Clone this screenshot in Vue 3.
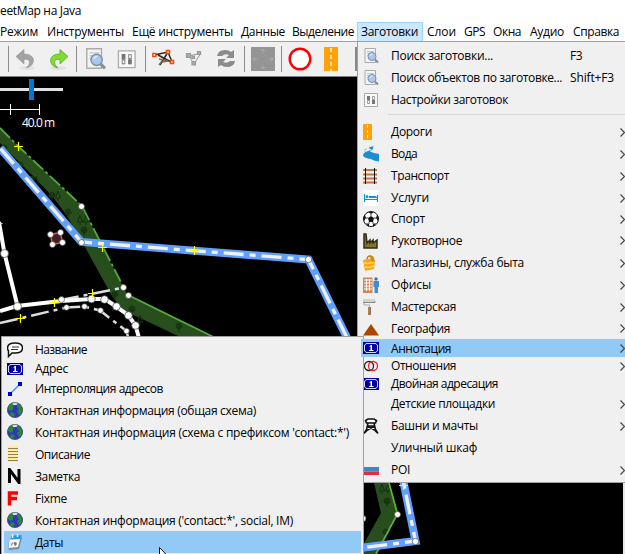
<script setup>
// v-fit spreads a label over the given width in pixels.
const vFit = {
  mounted(el, { value }) {
    if (!value) return
    const natural = el.getBoundingClientRect().width
    el.style.letterSpacing = (value - natural) / el.textContent.length + 'px'
  },
}

const menus = [
  { t: 'Режим', w: 38, g: 0 }, { t: 'Инструменты', w: 77, g: 9 },
  { t: 'Ещё инструменты', w: 101, g: 8 }, { t: 'Данные', w: 44, g: 8 },
  { t: 'Выделение', w: 62, g: 7 }, { t: 'Заготовки', w: 57, g: 3, on: true },
  { t: 'Слои', w: 29, g: 4 }, { t: 'GPS', w: 21, g: 8 }, { t: 'Окна', w: 28, g: 8 },
  { t: 'Аудио', w: 34, g: 9 }, { t: 'Справка', w: 46, g: 9 },
]

const searchIcon = '<path d="M2 .5h10.500v14H2z" fill="#f4f4f0" stroke="#aaa"/><path d="M4 3.500h7M4 5.500h3M4 7.500h2" stroke="#c4c4c4"/><circle cx="9" cy="8.500" r="4" fill="#a9c8ec" stroke="#7790ad"/><path d="M7 8q.5-2 2.500-2" stroke="#e4f0ff" fill="none"/><path d="M12 11.500l3 3" stroke="#8b8e96" stroke-width="2.200"/>'
const prefsIcon = '<path d="M1.500 1.500h13v13h-13z" fill="#f8f8f8" stroke="#aaa"/><path d="M5.500 4v8M10.500 4v8" stroke="#777"/><path d="M4 4h3v4H4zM9 8h3v4H9z" fill="#777"/><path d="M4.500 8.500h2v3h-2zM9.500 4.500h2v3h-2z" fill="#fff" stroke="#888" stroke-width=".8"/>'
const signIcon = '<path d="M0 2h16v12H0z" fill="#0000a0"/><path d="M3 3.500h10q0 1.500 1.500 1.500v6q-1.500 0-1.500 1.500H3q0-1.500-1.500-1.500V5Q3 5 3 3.500z" fill="none" stroke="#d5d5f5"/><path d="M6 6.500l2-1.500h1v5h1.500v1H6v-1h1.500V6.500z" fill="#fff"/>'
const globeIcon = '<circle cx="8" cy="8" r="7.800" fill="#3236bd"/><path d="M2 3q2-2.500 5-2.700l1 3-2 1v3L4 9 1 7q-.5-2 1-4zM10 2l3 .5 2.500 4v3L13 13l-2-1-1-3 2-2-2-2zM4 10l3 1 1 2-2 2-3-2z" fill="#27873e"/><path d="M5 1q3-1.500 6 0L9.500 3h-3z" fill="#dfe9ee"/><circle cx="8" cy="8" r="7.500" fill="none" stroke="#49535f" stroke-width=".7"/>'

const icons = {
  search: searchIcon,
  prefs: prefsIcon,
  sign: signIcon,
  globe: globeIcon,
  road: '<path d="M0 0h9v16H0z" fill="#ffa20a"/><path d="M4.500 1v15" stroke="#fff" stroke-dasharray="3 2"/>',
  water: '<path d="M6 1.500Q8 0 11 .5 9 1.500 10.500 2.500 9 4 6.500 5 8 6.500 16 8v7.500Q11 15 8 13 1 12 0 9.500 0 7 4 5.500 6 4.500 9 3 6 3 6 1.500z" fill="#1b8fd2"/><path d="M1 4l3-1M1 6l2-1" stroke="#7fc0e6" stroke-width=".8"/>',
  rail: '<path d="M0 2h14M0 6.500h14M0 10.500h14M0 14.500h14" stroke="#c8713b" stroke-width="2"/><path d="M2.500 0v16M11.500 0v16" stroke="#111"/>',
  bed: '<rect width="16" height="16" rx="2" fill="#fff"/><path d="M1.500 4v8M14.500 5v7M2 9.500h12" stroke="#0d92d6" stroke-width="1.200"/><path d="M6 6h6q2 0 2 2H6z" fill="#0d92d6"/><circle cx="4" cy="6.700" r="1.400" fill="#0d92d6"/>',
  ball: '<circle cx="8" cy="8" r="7.500" fill="#fff" stroke="#111"/><path d="M8 5l3 2-1 4H6L5 7zM5 1h6L8 3zM0 7l2-3 1 3-2 3zM16 7l-2-3-1 3 2 3zM3 12l3 1v3zM13 12l-3 1v3z" fill="#111"/><path d="M8 5V3M5 7H3m8 0h2M6 11v2m4-2v2" stroke="#111" stroke-width=".8"/>',
  factory: '<path d="M1 15V1h2l1 9 3-3v3l3-3v3l4-3v8z" fill="#857231" stroke="#322c17" stroke-width="1.500"/>',
  bag: '<path d="M4 5q0-4 3-4t3 4" fill="none" stroke="#b77a18" stroke-width="1.300"/><path d="M0 5l10-2 2 3-1 8-9 2z" fill="#f7a81c"/><path d="M1 8q5 1 10-1M2 12q5 1 9-1" stroke="#ffd448" fill="none" stroke-width="1.500"/><path d="M7 2l3-1 2 5-3 1z" fill="#d28c1c"/>',
  office: '<path d="M0 .5h9.500V16H0z" fill="#d28557"/><path d="M1 3h8M1 6h8M1 9h8M1 12h8M3.500 2v12M6.500 2v12" stroke="#fff"/><circle cx="13" cy="2" r="1.700" fill="#3174bd"/><path d="M10.500 4h5.500v6h-1v6h-3.500v-6h-1z" fill="#438bd4"/>',
  roller: '<path d="M0 0h12v3H0z" fill="#d3d3c6"/><path d="M0 3.500h12V2" stroke="#888" fill="none"/><path d="M1 4v2h5.500v3" stroke="#aaa" fill="none"/><path d="M5 8h3v8H5z" fill="#c17a38"/><path d="M7.500 8v8" stroke="#777"/>',
  hill: '<path d="M0 14.500L8 3l8 11.500z" fill="#ab4500"/>',
  rings: '<ellipse cx="6" cy="8" rx="4.500" ry="4.500" fill="none" stroke="#222" stroke-width="1.300"/><ellipse cx="10" cy="8" rx="4.500" ry="4.500" fill="none" stroke="#f0232b" stroke-width="1.300"/>',
  tower: '<path d="M5 1h6l2.500 1.500L12.500 5h-9L2.500 2.500z" fill="#fff" stroke="#111" stroke-width="1.600"/><path d="M5 5L3.500 11.500 1 15.500M11 5l1.500 6.500 2.500 4M4 8h8M4.500 8l7 4 3 3M11.500 8l-7 4-3 3" fill="none" stroke="#111" stroke-width="1.500"/>',
  flag: '<path d="M0 2h16v3H0z" fill="#eee"/><path d="M0 5h16v4.500H0z" fill="#3b88c3"/><path d="M0 9.500h16V13H0z" fill="#dd2e44"/>',
  bubble: '<path d="M8 1q7.500 0 7.500 5T8 11H5l-3.500 3.500L1.500 9Q.5 7.500.5 6 .5 1 8 1z" fill="#fff" stroke="#111" stroke-width="1.500"/><path d="M5 5h7M4 7.500h7" stroke="#333"/>',
  interp: '<path d="M3 13L13 3" stroke="#2995e8" stroke-width="1.300"/><path d="M1 11h4v4H1zM11 1h4v4h-4z" fill="#0000df"/>',
  note: '<path d="M1 0h10v16H1z" fill="#ffec9f"/><path d="M1 2.500h10M1 5.500h10M1 8.500h10M1 11.500h10M1 14.500h10" stroke="#8e8050"/>',
  en: '<path d="M2.500 15V1.500l9.500 13V1" fill="none" stroke="#000" stroke-width="3"/>',
  ef: '<path d="M2.500 15.500V3H11M3 8.500h7" fill="none" stroke="#f00" stroke-width="3.500"/>',
  dates: '<path d="M3 2l11-1 1 3-3 11-10 1-1-3z" fill="#7d8d98"/><path d="M3 2.500l11-1-3 11.500-9.500 1z" fill="#f5f5f5"/><path d="M4 2l10.500-1-1 4L3 5.500z" fill="#249bdc"/><path d="M5.500 0v4M10.500 0v3" stroke="#eef" stroke-width="1.500"/><path d="M4.500 11.500l1-3M8 8l-1 2h3M9 8l-1 4" stroke="#666" fill="none"/>',
}

const presets = [
  { i: 'search', t: 'Поиск заготовки...', w: 102, k: 'F3', kw: 12, h: 22 },
  { i: 'search', t: 'Поиск объектов по заготовке...', w: 171, k: 'Shift+F3', kw: 44, h: 22 },
  { i: 'prefs', t: 'Настройки заготовок', w: 117, h: 22 },
  { line: true, h: 10 },
  { i: 'road', t: 'Дороги', w: 41, h: 22, sub: true },
  { i: 'water', t: 'Вода', w: 26, h: 22, sub: true },
  { i: 'rail', t: 'Транспорт', w: 58, h: 22, sub: true },
  { i: 'bed', t: 'Услуги', w: 38, h: 22, sub: true },
  { i: 'ball', t: 'Спорт', w: 34, h: 20, sub: true },
  { i: 'factory', t: 'Рукотворное', w: 71, h: 23, sub: true },
  { i: 'bag', t: 'Магазины, служба быта', w: 133, h: 22, sub: true },
  { i: 'office', t: 'Офисы', w: 40, h: 22, sub: true },
  { i: 'roller', t: 'Мастерская', w: 65, h: 22, sub: true },
  { i: 'hill', t: 'География', w: 59, h: 21, sub: true },
  { i: 'sign', t: 'Аннотация', w: 60, h: 18, sub: true, on: true },
  { i: 'rings', t: 'Отношения', w: 65, h: 18, sub: true },
  { i: 'sign', t: 'Двойная адресация', w: 107, h: 18 },
  { t: 'Детские площадки', w: 104, h: 22, sub: true },
  { i: 'tower', t: 'Башни и мачты', w: 87, h: 22, sub: true },
  { t: 'Уличный шкаф', w: 86, h: 22 },
  { i: 'flag', t: 'POI', w: 19, h: 22, sub: true },
]

const annotations = [
  { i: 'bubble', t: 'Название', w: 52, h: 21 },
  { i: 'sign', t: 'Адрес', w: 33, h: 18 },
  { i: 'interp', t: 'Интерполяция адресов', w: 128, h: 21 },
  { i: 'globe', t: 'Контактная информация (общая схема)', w: 221, h: 22 },
  { i: 'globe', t: "Контактная информация (схема с префиксом 'contact:*')", w: 314, h: 22 },
  { i: 'note', t: 'Описание', w: 55, h: 22 },
  { i: 'en', t: 'Заметка', w: 45, h: 22 },
  { i: 'ef', t: 'Fixme', w: 32, h: 22 },
  { i: 'globe', t: "Контактная информация ('contact:*', social, IM)", w: 258, h: 22 },
  { i: 'dates', t: 'Даты', w: 28, h: 22, on: true },
]

const arrow = '<path d="M11 2.500L3 9.500 11 17v-4.500q5-1 5.500 2.500.3 3-3.500 6 7-1.500 7.500-7.500Q20 7 11 7z"/>'
const refresh = '<path d="M3 9q1-6 8-6 4 0 6 2l3-2v8h-8l3-3q-4-2-7 1zM21 14q-1 6-8 6-4 0-6-2l-3 2v-8h8l-3 3q4 2 7-1z" fill="#8b8b8b"/>'
const tools = [
  { c: 'sep' },
  { c: 'wide', s: `<ellipse cx="13" cy="21" rx="8" ry="2" fill="#e2e2e2"/><g transform="translate(-1 0)" fill="#a2a2a2" stroke="#949494" stroke-width=".6">${arrow}</g>` },
  { c: 'wide', s: `<ellipse cx="11" cy="21" rx="8" ry="2" fill="#e2e2e2"/><g transform="translate(24 0) scale(-1 1)" fill="#80dc35" stroke="#58ad21" stroke-width=".8">${arrow}</g>` },
  { c: 'sep after-wide' },
  { s: `<g transform="translate(0 1) scale(1.400)">${searchIcon}</g>` },
  { s: `<g transform="translate(1.500 2) scale(1.280)">${prefsIcon}</g>` },
  { c: 'sep' },
  { s: '<path d="M2 8l14-3-8 13M6 8l13 7M16 5l4 10" stroke="#35251d" stroke-width="1.500" fill="none"/><path d="M7 12l9 2-6 1M7 18l3-4" stroke="#7a6b5a" fill="none" stroke-width="1.500"/><g fill="#fff" stroke="#ef4c0c" stroke-width="1.500"><path d="M.8 6.500h3v3h-3zM14.500 3.500h3v3h-3zM18.500 13.500h3v3h-3z"/></g>' },
  { s: '<g stroke="#999" fill="none"><path d="M6 9l12-3-7 11-5-8"/><g fill="#aaa" stroke-width="1.200"><path d="M3.500 6.500h4v4h-4zM14.500 4.500h3v3h-3zM9 14.500h3.500V18H9zM9 9h2.500v2.500H9z"/></g></g>' },
  { s: refresh },
  { c: 'sep' },
  { s: '<path d="M0 0h24v24H0z" fill="#959595"/><path d="M12 6V2l-2 2m2-2l2 2M12 18v4l-2-2m2 2l2-2M6 12H2l2-2m-2 2l2 2M18 12h4l-2-2m2 2l-2 2" stroke="#aaa" fill="none"/>' },
  { c: 'sep' },
  { s: '<circle cx="12" cy="12" r="10.300" fill="#fff" stroke="#f00" stroke-width="2.400"/>' },
  { s: '<path d="M5 0h14v24H5z" fill="#ffa20a"/><path d="M12 1v23" stroke="#fff" stroke-width="1.300" stroke-dasharray="4 3"/>' },
  { s: '<path d="M5 0h19v24H5z" fill="#888"/>' },
]

const crosses = [[18.5, 146.5], [102.5, 247.5], [92.5, 293.5], [54.5, 302.5], [20.5, 318.5], [-2, 223.5], [194.5, 250.5], [403.5, 485.5]]
const nodes = [
  [4.5, 253.5, 4], [17.5, 306.5, 4], [61.5, 299.5, 3], [91.5, 299, 3.8], [104.5, 299.5, 3.8],
  [116.5, 306.5, 3.8], [128.5, 315.5, 3.8], [135.5, 325.5, 3.8], [66.5, 307.5, 2.8], [84.5, 306.5, 2.8],
  [100.5, 310.5, 2.8], [126.5, 331, 2.8], [123.5, 287.5, 3], [128.5, 295.5, 3], [81.5, 206.5, 3],
  [81.5, 242.5, 3], [308.5, 259.5, 3.2], [50.5, 234.5, 3], [60.5, 232.5, 3], [62.5, 242.5, 3],
  [52.5, 244.5, 3], [397.5, 514.5, 3], [415.5, 541.5, 3.2], [363, 518.5, 3],
]
// The third number picks the kind: 1 is a leafy tree, 0 a conifer outline.
const trees = [[4, 148, 1], [20, 165, 1], [31, 179, 1], [36, 180, 0], [52, 195, 1], [58, 195, 0], [68, 212, 1], [80, 219, 0], [86, 219, 0], [84, 230, 1], [115, 294, 1], [132, 309, 1], [140, 319, 0], [179, 326, 1], [382, 488, 0], [388, 488, 0], [387, 501, 1], [386, 532, 1]]
</script>

<template>
  <div class="screen">
    <div class="title"><span v-fit="81">eetMap на Java</span></div>
    <nav class="menubar">
      <div v-for="m in menus" :key="m.t" class="menu" :class="{ open: m.on }" :style="{ marginLeft: m.g + 'px' }">
        <span v-fit="m.w" class="label">{{ m.t }}</span>
      </div>
    </nav>
    <div class="toolbar">
      <div v-for="(t, n) in tools" :key="n" class="tool" :class="t.c">
        <svg v-if="t.s" width="24" height="24" viewBox="0 0 24 24" v-html="t.s" />
      </div>
    </div>
    <div class="map">
      <svg width="625" height="477" viewBox="0 77 625 477">
        <g fill="#274e1c">
          <path d="M0 128L18 146L82 206L123 287L128 295L242 352H212L123 310L112 296L85 247L67 216L53 197L33 176L0 143z" />
          <path d="M374 483H389L397.500 514L376 554H358L381 513z" />
        </g>
        <g stroke="#15300f">
          <g v-for="(p, n) in trees" :key="n" :transform="`translate(${p[0]} ${p[1]})`">
            <g v-if="p[2]"><circle r="3" fill="#1a3913" stroke-dasharray="2 1" /><path d="M0 0v6" /></g>
            <path v-else d="M0-4l-2.500 7h5zM0 3v3" fill="none" />
          </g>
        </g>
        <path d="M0 128L18 146L82 206L123.500 287" fill="none" stroke="#55a83a" stroke-width="1.800" stroke-dasharray="14 3 3 3" />
        <path d="M128 295L242 351M389 483L397.500 514L376 554" fill="none" stroke="#55b13c" stroke-width="1.800" />
        <g fill="none" stroke="#ddd" stroke-width="2.500" stroke-dasharray="18 5 4 5">
          <path d="M0 323L66.500 307.500L84 306.500L100 310.500L126.500 331L128 337" />
          <path d="M61 300L123.500 287.500" />
        </g>
        <g fill="none" stroke="#fff" stroke-width="4">
          <path d="M-1 222L4.500 253.500L17.500 306" />
          <path d="M0 311L17 306L61 301L91 299H105L116 306.500L128.500 315.500L135.500 325.500L139 338" />
        </g>
        <path d="M50.500 234.500L60.500 232.500L62.500 242.500L52.500 244.500z" fill="#44201c" stroke="#d35d4b" stroke-width="1.500" />
        <g fill="none" stroke="#619fff" stroke-width="8">
          <path d="M0 148L81.500 242L308.500 259.500L355 354" />
          <path d="M402 475L415.500 541L360 548" />
        </g>
        <g fill="none" stroke="#f0f0f0" stroke-width="3.300" stroke-dasharray="20 6 6 6">
          <path d="M0 148L81.500 242L308.500 259.500L355 354" stroke-dashoffset="37" />
          <path d="M402 475L415.500 541L360 548" stroke-dashoffset="18" />
        </g>
        <circle v-for="(p, n) in nodes" :key="n" :cx="p[0]" :cy="p[1]" :r="p[2]" fill="#fff" stroke="#444" stroke-width=".7" />
        <path v-for="(p, n) in crosses" :key="n" :d="`M${p[0] - 4.5} ${p[1]}h9m-4.500-4.500v9`" stroke="#ff0" stroke-width="1.200" />
        <path d="M0 89.500H63" stroke="#e1e1e1" stroke-width="3" />
        <path d="M29 79h5v21h-5z" fill="#0078d7" />
        <path d="M0 109.500H39.500M10.500 104v11M39.500 104v11" stroke="#fff" fill="none" />
        <text x="22" y="127" textLength="33" class="scale">40.0 m</text>
        <path d="M623 477h2v77h-2z" fill="#e8e8e8" />
      </svg>
    </div>

    <div class="popup presets">
      <div v-for="(p, n) in presets" :key="n" class="row" :class="{ active: p.on }" :style="{ height: p.h + 'px' }">
        <hr v-if="p.line">
        <template v-else>
          <span class="icon"><svg v-if="p.i" width="16" height="16" viewBox="0 0 16 16" v-html="icons[p.i]" /></span>
          <span class="text"><span v-fit="p.w" class="label">{{ p.t }}</span></span>
          <span v-if="p.k" class="key"><span v-fit="p.kw" class="label">{{ p.k }}</span></span>
          <svg v-if="p.sub" class="more" width="6" height="9" viewBox="0 0 6 9"><path d="M.5.500l4 4-4 4" fill="none" stroke="#444" stroke-width="1.200" /></svg>
        </template>
      </div>
    </div>

    <div class="popup annotations">
      <div v-for="(p, n) in annotations" :key="n" class="row" :class="{ active: p.on, tall: p.h === 22 }" :style="{ height: p.h + 'px' }">
        <span class="icon"><svg width="16" height="16" viewBox="0 0 16 16" v-html="icons[p.i]" /></span>
        <span class="text"><span v-fit="p.w" class="label">{{ p.t }}</span></span>
      </div>
    </div>

    <svg class="cursor" width="12" height="19" viewBox="0 0 12 19"><path d="M.5.500v16l4-4 3 6 2-1-3-5.500h5z" fill="#fff" stroke="#000" /></svg>
  </div>
</template>

<style>
body { overflow: hidden; }
</style>

<style scoped>
.screen { position: relative; width: 625px; height: 554px; overflow: hidden; background: #fff; color: #000; font: 12px/16px "Open Sans", "Noto Sans", sans-serif; display: flex; flex-direction: column; }
.label { display: inline-block; white-space: nowrap; }
.title { height: 22px; flex: none; padding-top: 3px; box-sizing: border-box; white-space: nowrap; }
.title span { display: inline-block; }
.menubar { height: 20px; flex: none; display: flex; box-sizing: border-box; border-bottom: 1px solid #a0a0a0; }
.menu { flex: none; padding-top: 2px; height: 19px; box-sizing: border-box; }
.open { padding: 1px 4px 0 3px; background: #cce8ff; border: 1px solid #99d1ff; border-bottom: 0; }
.toolbar { height: 35px; flex: none; display: flex; align-items: center; box-sizing: border-box; padding-left: 8px; background: #f0f0f0; border-bottom: 1px solid #808080; }
.tool { width: 31px; flex: none; display: flex; justify-content: center; }
.tool svg { display: block; flex: none; margin-left: 1px; }
.wide { width: 33px; }
.sep { width: 1px; height: 26px; background: #8c8c8c; margin: 0 2px 0 3px; }
.sep:first-child { margin: 0; }
.sep.after-wide { margin: 0 3px 0 1px; }
.map { flex: 1; background: #000; }
.map svg { display: block; }
.scale { font: 12px "Open Sans", sans-serif; fill: #fff; }
.popup { position: absolute; background: #f0f0f0; box-sizing: border-box; border: 1px solid #a0a0a0; }
.presets { left: 357px; top: 41px; width: 275px; height: 442px; padding: 3px 0 0 3px; }
.annotations { left: 1px; top: 336px; width: 363px; height: 225px; padding: 2px 2px 0; z-index: 2; }
.row { display: flex; align-items: center; position: relative; }
.row hr { flex: 1; margin: 0 0 4px 27px; border: 0; border-top: 1px solid #d7d7d7; }
.active { background: #91c9f7; z-index: 3; }
.icon { width: 16px; height: 16px; margin-left: 2px; flex: none; }
.annotations .icon { margin-left: 3px; }
.icon svg { display: block; }
.text { width: 167px; margin-left: 12px; flex: none; }
.annotations .text { width: auto; }
.tall .text, .active .text { padding-top: 2px; }
.key { margin-left: 12px; }
.more { margin-left: 62px; flex: none; }
.cursor { position: absolute; left: 159px; top: 547px; z-index: 4; }
</style>
